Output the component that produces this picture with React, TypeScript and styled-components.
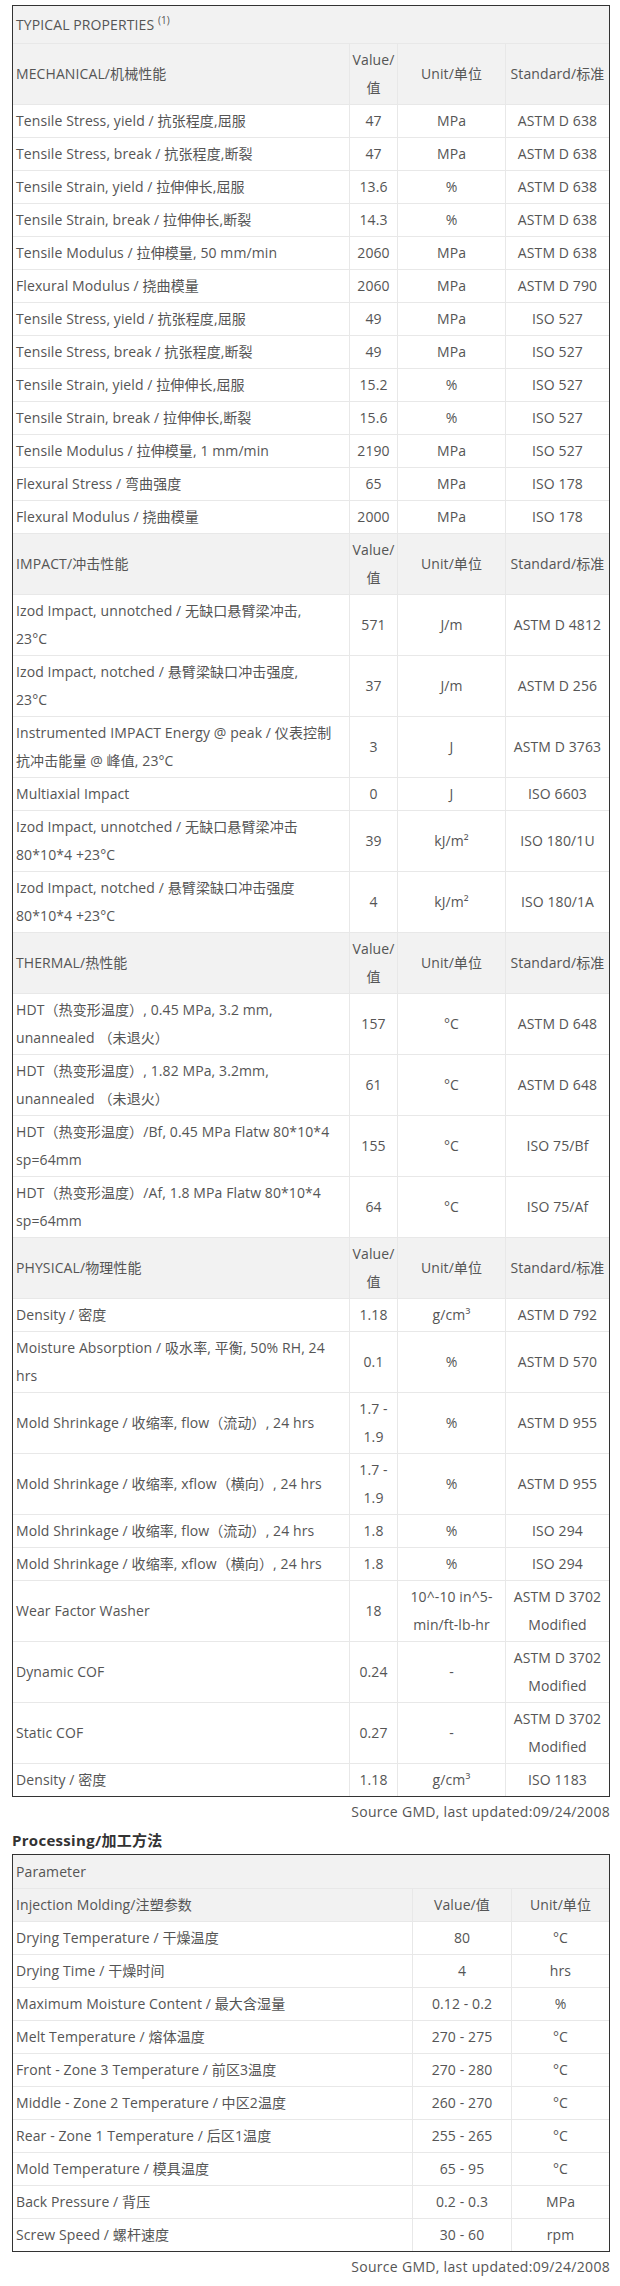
import React from 'react';
import styled, { createGlobalStyle } from 'styled-components';

const GlobalStyle = createGlobalStyle`
  body {
    margin: 0;
    background: #fff;
    font-family: 'Open Sans', 'Noto Sans CJK SC', sans-serif;
    color: #555;
  }
`;

const Page = styled.div`
  padding: 5px 10px 0 12px;
`;

const Table = styled.table`
  width: 100%;
  table-layout: fixed;
  border-collapse: separate;
  border-spacing: 0;
  border: 1px solid #333;
  font-size: 14px;
  letter-spacing: 0.1px;
`;

const Row = styled.tr<{ $head?: boolean }>`
  background: ${(p) => (p.$head ? '#f2f2f2' : '#fff')};
  &:first-child > td {
    border-top: none;
  }
`;

const Cell = styled.td<{ $align?: 'left' | 'center'; $pad?: string }>`
  padding: ${(p) => p.$pad || '2px 2px'};
  line-height: 28px;
  text-align: ${(p) => p.$align || 'center'};
  vertical-align: middle;
  white-space: pre-line;
  border-top: 1px solid #e8e8e8;
  border-left: 1px solid #e8e8e8;
  color: #555;
  &:first-child {
    border-left: none;
    padding-left: 3px;
  }
`;

const Sup = styled.sup`
  font-size: 10px;
  line-height: 0;
  vertical-align: 6px;
`;

const Source = styled.div`
  margin-top: 1px;
  text-align: right;
  font-size: 14px;
  line-height: 28px;
  letter-spacing: 0.3px;
  color: #555;
`;

const Heading = styled.h3`
  margin: 4px 0 4px;
  font-size: 15px;
  line-height: 20px;
  font-weight: 700;
  color: #333;
  letter-spacing: 0.3px;
`;

type Prop = [string, string, string, string];

type Section = {
  title: string;
  rows: Prop[];
};

const sections: Section[] = [
  {
    title: 'MECHANICAL/机械性能',
    rows: [
      ['Tensile Stress, yield / 抗张程度,屈服', '47', 'MPa', 'ASTM D 638'],
      ['Tensile Stress, break / 抗张程度,断裂', '47', 'MPa', 'ASTM D 638'],
      ['Tensile Strain, yield / 拉伸伸长,屈服', '13.6', '%', 'ASTM D 638'],
      ['Tensile Strain, break / 拉伸伸长,断裂', '14.3', '%', 'ASTM D 638'],
      ['Tensile Modulus / 拉伸模量, 50 mm/min', '2060', 'MPa', 'ASTM D 638'],
      ['Flexural Modulus / 挠曲模量', '2060', 'MPa', 'ASTM D 790'],
      ['Tensile Stress, yield / 抗张程度,屈服', '49', 'MPa', 'ISO 527'],
      ['Tensile Stress, break / 抗张程度,断裂', '49', 'MPa', 'ISO 527'],
      ['Tensile Strain, yield / 拉伸伸长,屈服', '15.2', '%', 'ISO 527'],
      ['Tensile Strain, break / 拉伸伸长,断裂', '15.6', '%', 'ISO 527'],
      ['Tensile Modulus / 拉伸模量, 1 mm/min', '2190', 'MPa', 'ISO 527'],
      ['Flexural Stress / 弯曲强度', '65', 'MPa', 'ISO 178'],
      ['Flexural Modulus / 挠曲模量', '2000', 'MPa', 'ISO 178'],
    ],
  },
  {
    title: 'IMPACT/冲击性能',
    rows: [
      ['Izod Impact, unnotched / 无缺口悬臂梁冲击,\n23°C', '571', 'J/m', 'ASTM D 4812'],
      ['Izod Impact, notched / 悬臂梁缺口冲击强度,\n23°C', '37', 'J/m', 'ASTM D 256'],
      ['Instrumented IMPACT Energy @ peak / 仪表控制\n抗冲击能量 @ 峰值, 23°C', '3', 'J', 'ASTM D 3763'],
      ['Multiaxial Impact', '0', 'J', 'ISO 6603'],
      ['Izod Impact, unnotched / 无缺口悬臂梁冲击\n80*10*4 +23°C', '39', 'kJ/m²', 'ISO 180/1U'],
      ['Izod Impact, notched / 悬臂梁缺口冲击强度\n80*10*4 +23°C', '4', 'kJ/m²', 'ISO 180/1A'],
    ],
  },
  {
    title: 'THERMAL/热性能',
    rows: [
      ['HDT（热变形温度）, 0.45 MPa, 3.2 mm,\nunannealed （未退火）', '157', '°C', 'ASTM D 648'],
      ['HDT（热变形温度）, 1.82 MPa, 3.2mm,\nunannealed （未退火）', '61', '°C', 'ASTM D 648'],
      ['HDT（热变形温度）/Bf, 0.45 MPa Flatw 80*10*4\nsp=64mm', '155', '°C', 'ISO 75/Bf'],
      ['HDT（热变形温度）/Af, 1.8 MPa Flatw 80*10*4\nsp=64mm', '64', '°C', 'ISO 75/Af'],
    ],
  },
  {
    title: 'PHYSICAL/物理性能',
    rows: [
      ['Density / 密度', '1.18', 'g/cm³', 'ASTM D 792'],
      ['Moisture Absorption / 吸水率, 平衡, 50% RH, 24\nhrs', '0.1', '%', 'ASTM D 570'],
      ['Mold Shrinkage / 收缩率, flow（流动）, 24 hrs', '1.7 -\n1.9', '%', 'ASTM D 955'],
      ['Mold Shrinkage / 收缩率, xflow（横向）, 24 hrs', '1.7 -\n1.9', '%', 'ASTM D 955'],
      ['Mold Shrinkage / 收缩率, flow（流动）, 24 hrs', '1.8', '%', 'ISO 294'],
      ['Mold Shrinkage / 收缩率, xflow（横向）, 24 hrs', '1.8', '%', 'ISO 294'],
      ['Wear Factor Washer', '18', '10^-10 in^5-\nmin/ft-lb-hr', 'ASTM D 3702\nModified'],
      ['Dynamic COF', '0.24', '-', 'ASTM D 3702\nModified'],
      ['Static COF', '0.27', '-', 'ASTM D 3702\nModified'],
      ['Density / 密度', '1.18', 'g/cm³', 'ISO 1183'],
    ],
  },
];

const processing: [string, string, string][] = [
  ['Drying Temperature / 干燥温度', '80', '°C'],
  ['Drying Time / 干燥时间', '4', 'hrs'],
  ['Maximum Moisture Content / 最大含湿量', '0.12 - 0.2', '%'],
  ['Melt Temperature / 熔体温度', '270 - 275', '°C'],
  ['Front - Zone 3 Temperature / 前区3温度', '270 - 280', '°C'],
  ['Middle - Zone 2 Temperature / 中区2温度', '260 - 270', '°C'],
  ['Rear - Zone 1 Temperature / 后区1温度', '255 - 265', '°C'],
  ['Mold Temperature / 模具温度', '65 - 95', '°C'],
  ['Back Pressure / 背压', '0.2 - 0.3', 'MPa'],
  ['Screw Speed / 螺杆速度', '30 - 60', 'rpm'],
];

function PropertiesTable() {
  return (
    <Table>
      <colgroup>
        <col style={{ width: 336 }} />
        <col style={{ width: 48 }} />
        <col style={{ width: 108 }} />
        <col />
      </colgroup>
      <tbody>
        <Row $head>
          <Cell colSpan={4} $align="left" $pad="5px 2px 4px">
            TYPICAL PROPERTIES <Sup>(1)</Sup>
          </Cell>
        </Row>
        {sections.map((section) => (
          <React.Fragment key={section.title}>
            <Row $head>
              <Cell $align="left">{section.title}</Cell>
              <Cell>{'Value/\n值'}</Cell>
              <Cell>Unit/单位</Cell>
              <Cell>Standard/标准</Cell>
            </Row>
            {section.rows.map((r, i) => (
              <Row key={i}>
                <Cell $align="left">{r[0]}</Cell>
                <Cell>{r[1]}</Cell>
                <Cell>{r[2]}</Cell>
                <Cell>{r[3]}</Cell>
              </Row>
            ))}
          </React.Fragment>
        ))}
      </tbody>
    </Table>
  );
}

function ProcessingTable() {
  return (
    <Table>
      <colgroup>
        <col style={{ width: 399 }} />
        <col style={{ width: 99 }} />
        <col />
      </colgroup>
      <tbody>
        <Row $head>
          <Cell colSpan={3} $align="left" $pad="3px 2px 2px">
            Parameter
          </Cell>
        </Row>
        <Row $head>
          <Cell $align="left">Injection Molding/注塑参数</Cell>
          <Cell>Value/值</Cell>
          <Cell>Unit/单位</Cell>
        </Row>
        {processing.map((r) => (
          <Row key={r[0]}>
            <Cell $align="left">{r[0]}</Cell>
            <Cell>{r[1]}</Cell>
            <Cell>{r[2]}</Cell>
          </Row>
        ))}
      </tbody>
    </Table>
  );
}

export default function App() {
  return (
    <>
      <GlobalStyle />
      <Page>
        <PropertiesTable />
        <Source>Source GMD, last updated:09/24/2008</Source>
        <Heading>Processing/加工方法</Heading>
        <ProcessingTable />
        <Source>Source GMD, last updated:09/24/2008</Source>
      </Page>
    </>
  );
}
